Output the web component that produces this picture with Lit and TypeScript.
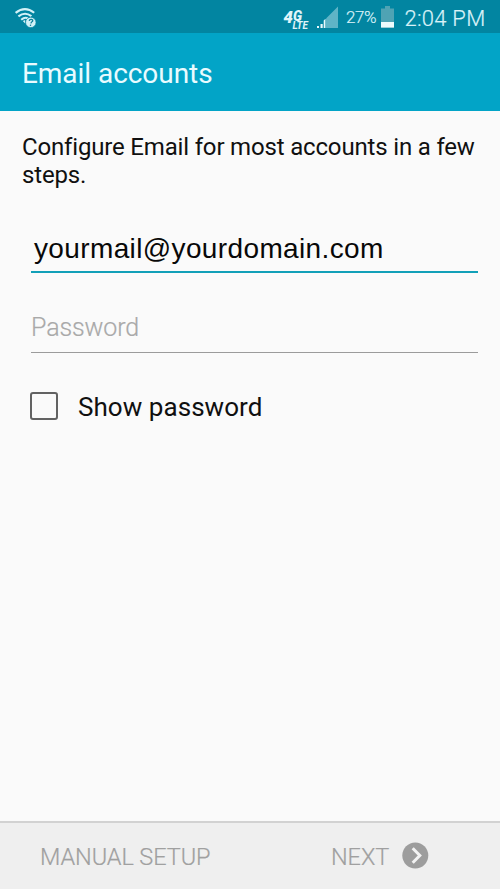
import { LitElement, html, css } from "lit";
import { customElement, property } from "lit/decorators.js";

@customElement("status-bar")
class StatusBar extends LitElement {
  static styles = css`
    :host { display: flex; height: 33px; background: #0285a1; color: #d9f2f8; align-items: center; }
    .wifi { margin-left: 14px; width: 24px; height: 33px; }
    .gap { flex: 1; }
    .signal { width: 60px; height: 33px; margin-right: 4px; }
    .lte { font: italic 900 17px Roboto, sans-serif; fill: #e0f5fa; }
    .gen { font-size: 14px; }
    .small { font-size: 10.5px; font-weight: 700; }
    .pct { width: 34px; font: 300 17px/33px Roboto, sans-serif; -webkit-text-stroke: 0.2px; padding-top: 2px; white-space: nowrap; letter-spacing: -0.4px; }
    .battery { width: 16px; height: 33px; }
    .time { width: 104px; padding-left: 8.5px; box-sizing: border-box; padding-top: 3px; font: 300 22px/33px Roboto, sans-serif; -webkit-text-stroke: 0.2px; white-space: nowrap; letter-spacing: 0.25px; }
  `;
  render() {
    return html`
      <svg class="wifi" viewBox="14 0 24 33" fill="none" stroke="#d3f1f7" stroke-width="2.1">
        <path d="M15.6 12.8Q25 5.4 34.2 12.8M18.4 16.4Q25 11.2 31.4 16.2M21.2 19.7Q25 16.6 27.8 18.4" />
        <path d="M22.8 21L25.2 23.6V20Z" fill="#d3f1f7" stroke="none" />
        <circle cx="30.8" cy="22.4" r="5.2" fill="#d3f1f7" stroke="#0285a1" stroke-width=".6" />
        <path d="M29.2 20.9Q29.5 19.2 31.2 19.3Q33.2 19.6 32.6 21.2Q31.1 22.2 30.9 23.4M30.6 24.6L30.4 25.9" stroke="#0b7f98" stroke-width="1.3" />
      </svg>
      <span class="gap"></span>
      <svg class="signal" viewBox="282 0 60 33">
        <text class="lte" x="283.5" y="22.5" textLength="18.5" lengthAdjust="spacingAndGlyphs">4<tspan class="gen" dy="-1.5">G</tspan></text>
        <text class="lte small" x="292.5" y="29.2" textLength="15.5" lengthAdjust="spacingAndGlyphs">LTE</text>
        <path d="M326 28V18.5L338 6.5V28Z" fill="#5fb4c6" />
        <path d="M317 28V26H319V28ZM320.5 28V24H322.7V28ZM323.7 28V20.5L325.5 18.8V28Z" fill="#e8f9fc" />
      </svg>
      <span class="pct">27%</span>
      <svg class="battery" viewBox="381 0 16 33">
        <path d="M386 6H391V8.5H395V28H382V8.5H386Z" fill="#4fa3b4" />
        <path d="M382 22H395V27.5H382Z" fill="#edfbfd" />
      </svg>
      <span class="time">2:04 PM</span>
    `;
  }
}

@customElement("text-field")
class TextField extends LitElement {
  @property() value = "";
  @property() placeholder = "";
  static styles = css`
    :host { display: block; margin: 0 22px 0 31px; }
    .value { height: 46px; border-bottom: 2px solid #12a0b8; padding-left: 3px; font: 28px/48px "Liberation Sans", sans-serif; letter-spacing: 0.37px; color: #080808; white-space: nowrap; }
    .hint { height: 51px; border-bottom: 1px solid #9b9b9b; font: 300 25px/53px Roboto, sans-serif; -webkit-text-stroke: 0.2px; letter-spacing: -0.1px; color: #a9a9a9; white-space: nowrap; }
  `;
  render() {
    return this.value
      ? html`<div class="value">${this.value}</div>`
      : html`<div class="hint">${this.placeholder}</div>`;
  }
}

@customElement("app-root")
class AppRoot extends LitElement {
  static styles = css`
    :host { display: flex; flex-direction: column; width: 500px; height: 889px; background: #fafafa; font-family: Roboto, sans-serif; overflow: hidden; }
    .title { height: 78px; box-sizing: border-box; padding: 3px 0 0 22px; background: #02a4c7; color: #e9fbff; font-size: 28px; line-height: 75px; letter-spacing: -0.05px; }
    .intro { margin: 22px 0 0 22px; font-size: 24px; line-height: 28px; letter-spacing: -0.17px; color: #101010; white-space: nowrap; height: 56px; }
    .email { margin-top: 36px; }
    .password { margin-top: 28px; }
    .check { display: flex; align-items: center; margin: 39px 0 0 30px; height: 28px; gap: 20px; font-size: 26px; color: #101010; white-space: nowrap; }
    .label { padding-top: 2px; letter-spacing: 0.05px; }
    .box { width: 28px; height: 28px; box-sizing: border-box; border: 2px solid #626262; border-radius: 3px; }
    .spacer { flex: 1; }
    .footer { display: flex; height: 68px; box-sizing: border-box; border-top: 2px solid #d2d2d2; background: #efefef; color: #a0a0a0; font-weight: 300; font-size: 23.5px; line-height: 69px; -webkit-text-stroke: 0.2px; letter-spacing: -0.08px; white-space: nowrap; }
    .manual { width: 291px; padding-left: 40px; }
    .next { width: 71px; }
    .arrow { width: 27px; height: 27px; margin-top: 19px; }
  `;
  render() {
    return html`
      <status-bar></status-bar>
      <div class="title"><span>Email accounts</span></div>
      <div class="intro">Configure Email for most accounts in a few<br />steps.</div>
      <text-field class="email" value="yourmail@yourdomain.com"></text-field>
      <text-field class="password" placeholder="Password"></text-field>
      <div class="check"><span class="box"></span><span class="label">Show password</span></div>
      <div class="spacer"></div>
      <div class="footer">
        <span class="manual">MANUAL SETUP</span>
        <span class="next">NEXT</span>
        <svg class="arrow" viewBox="0 0 27 27" fill="none">
          <circle cx="13.3" cy="13.5" r="13" fill="#9d9d9d" />
          <path d="M10.7 6.3L17.8 13.5L10.7 20.7" stroke="#f3f3f3" stroke-width="3" />
        </svg>
      </div>
    `;
  }
}
